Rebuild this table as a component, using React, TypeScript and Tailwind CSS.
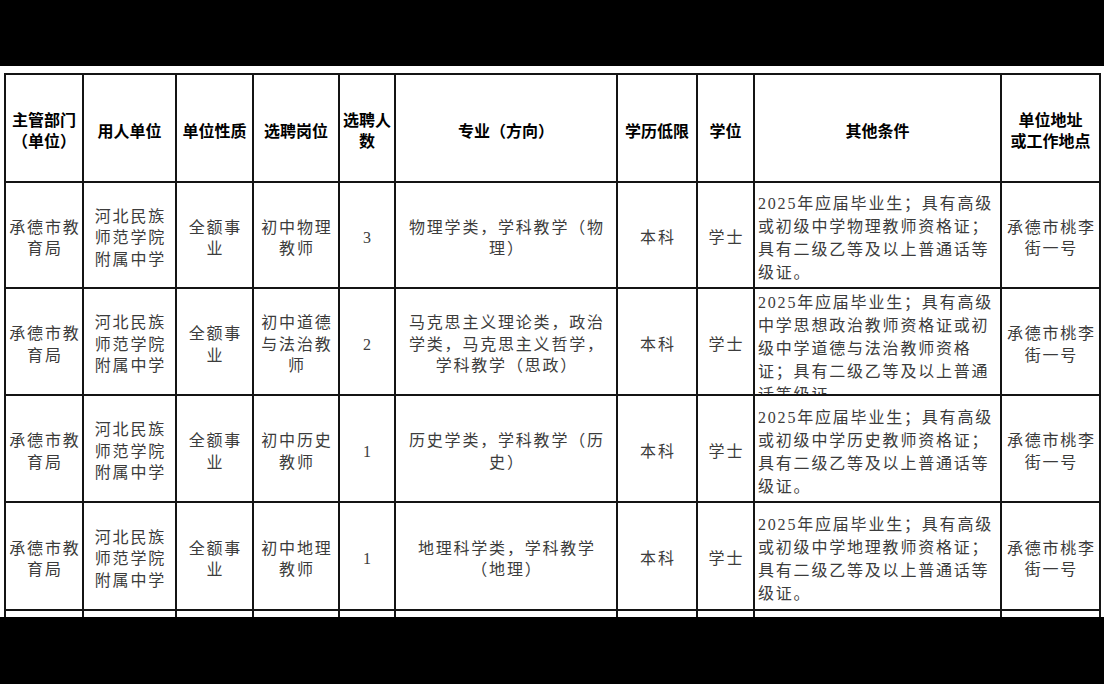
import React from "react";

type Row = {
  dept: string[];
  unit: string[];
  nature: string[];
  post: string[];
  num: string;
  major: string[];
  edu: string;
  degree: string;
  cond: string[];
  addr: string[];
  top?: boolean;
};

const rows: Row[] = [
  {
    dept: ["承德市教", "育局"],
    unit: ["河北民族", "师范学院", "附属中学"],
    nature: ["全额事", "业"],
    post: ["初中物理", "教师"],
    num: "3",
    major: ["物理学类，学科教学（物", "理）"],
    edu: "本科",
    degree: "学士",
    cond: ["2025年应届毕业生；具有高级", "或初级中学物理教师资格证；", "具有二级乙等及以上普通话等", "级证。"],
    addr: ["承德市桃李", "街一号"],
  },
  {
    dept: ["承德市教", "育局"],
    unit: ["河北民族", "师范学院", "附属中学"],
    nature: ["全额事", "业"],
    post: ["初中道德", "与法治教", "师"],
    num: "2",
    major: ["马克思主义理论类，政治", "学类，马克思主义哲学，", "学科教学（思政）"],
    edu: "本科",
    degree: "学士",
    cond: ["2025年应届毕业生；具有高级", "中学思想政治教师资格证或初", "级中学道德与法治教师资格", "证；具有二级乙等及以上普通", "话等级证。"],
    addr: ["承德市桃李", "街一号"],
    top: true,
  },
  {
    dept: ["承德市教", "育局"],
    unit: ["河北民族", "师范学院", "附属中学"],
    nature: ["全额事", "业"],
    post: ["初中历史", "教师"],
    num: "1",
    major: ["历史学类，学科教学（历", "史）"],
    edu: "本科",
    degree: "学士",
    cond: ["2025年应届毕业生；具有高级", "或初级中学历史教师资格证；", "具有二级乙等及以上普通话等", "级证。"],
    addr: ["承德市桃李", "街一号"],
  },
  {
    dept: ["承德市教", "育局"],
    unit: ["河北民族", "师范学院", "附属中学"],
    nature: ["全额事", "业"],
    post: ["初中地理", "教师"],
    num: "1",
    major: ["地理科学类，学科教学", "（地理）"],
    edu: "本科",
    degree: "学士",
    cond: ["2025年应届毕业生；具有高级", "或初级中学地理教师资格证；", "具有二级乙等及以上普通话等", "级证。"],
    addr: ["承德市桃李", "街一号"],
  },
];

const headers: string[][] = [
  ["主管部门", "（单位）"],
  ["用人单位"],
  ["单位性质"],
  ["选聘岗位"],
  ["选聘人", "数"],
  ["专业（方向）"],
  ["学历低限"],
  ["学位"],
  ["其他条件"],
  ["单位地址", "或工作地点"],
];

function Lines({ lines }: { lines: string[] }) {
  return (
    <>
      {lines.map((l, i) => (
        <span key={i} className="block whitespace-nowrap">
          {l}
        </span>
      ))}
    </>
  );
}

function HeadCell({ lines }: { lines: string[] }) {
  return (
    <div className="bg-white flex items-center justify-center text-center overflow-hidden pt-[4px] font-['Noto_Sans_CJK_SC',sans-serif] font-bold text-[16px] leading-[21px] text-black">
      <div>
        <Lines lines={lines} />
      </div>
    </div>
  );
}

function BodyCell({ lines }: { lines: string[] }) {
  return (
    <div className="bg-white flex items-center justify-center text-center overflow-hidden pt-[6px] text-[16px] leading-[21.5px] tracking-[1.8px] text-[#3c3c3c]">
      <div className="pl-[1.8px]">
        <Lines lines={lines} />
      </div>
    </div>
  );
}

export default function App() {
  return (
    <div className="w-[1104px] h-[684px] bg-black flex flex-col overflow-hidden">
      <div className="h-[66px] shrink-0 bg-black" />
      <div className="h-[551px] shrink-0 bg-white overflow-hidden pt-[7px] pl-[4px]">
        <div className="w-max grid grid-cols-[76px_91px_75px_84px_54px_220px_78px_55px_245px_97px] grid-rows-[106px_104px_105px_105px_106px_40px] gap-[2px] bg-[#141414] p-[2px] font-['Liberation_Serif','Noto_Sans_CJK_SC',serif]">
          {headers.map((h, i) => (
            <HeadCell key={i} lines={h} />
          ))}
          {rows.map((r, i) => (
            <React.Fragment key={i}>
              <BodyCell lines={r.dept} />
              <BodyCell lines={r.unit} />
              <BodyCell lines={r.nature} />
              <BodyCell lines={r.post} />
              <BodyCell lines={[r.num]} />
              <BodyCell lines={r.major} />
              <BodyCell lines={[r.edu]} />
              <BodyCell lines={[r.degree]} />
              <div
                className={
                  r.top
                    ? "bg-white flex items-start overflow-hidden pt-[2px] pl-[3px] text-[16px] leading-[23px] tracking-[1.8px] text-[#3c3c3c]"
                    : "bg-white flex items-center overflow-hidden pt-[6px] pl-[3px] text-[16px] leading-[23px] tracking-[1.8px] text-[#3c3c3c]"
                }
              >
                <div>
                  <Lines lines={r.cond} />
                </div>
              </div>
              <BodyCell lines={r.addr} />
            </React.Fragment>
          ))}
          {Array.from({ length: 10 }).map((_, i) => (
            <div key={`e${i}`} className="bg-white" />
          ))}
        </div>
      </div>
      <div className="flex-1 bg-black" />
    </div>
  );
}
